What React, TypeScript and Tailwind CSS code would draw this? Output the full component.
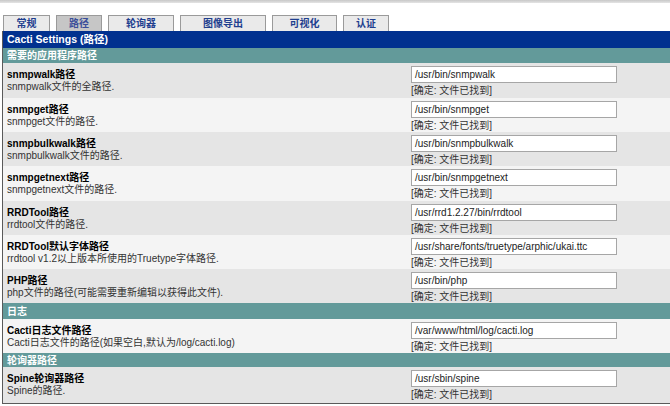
import React from 'react'

const tabs = [
  { label: '常规', w: 'w-[47px]', active: false },
  { label: '路径', w: 'w-[46px]', active: true },
  { label: '轮询器', w: 'w-[66px]', active: false },
  { label: '图像导出', w: 'w-[86px]', active: false },
  { label: '可视化', w: 'w-[65px]', active: false },
  { label: '认证', w: 'w-[46px]', active: false }
]

type Row = { kind: 'row'; title: string; desc: string; value: string; h: string; dark: boolean }
type Head = { kind: 'head'; label: string; h: string }

const rows: (Row | Head)[] = [
  { kind: 'row', title: 'snmpwalk路径', desc: 'snmpwalk文件的全路径.', value: '/usr/bin/snmpwalk', h: 'h-[35px]', dark: true },
  { kind: 'row', title: 'snmpget路径', desc: 'snmpget文件的路径.', value: '/usr/bin/snmpget', h: 'h-[34px]', dark: false },
  { kind: 'row', title: 'snmpbulkwalk路径', desc: 'snmpbulkwalk文件的路径.', value: '/usr/bin/snmpbulkwalk', h: 'h-[34px]', dark: true },
  { kind: 'row', title: 'snmpgetnext路径', desc: 'snmpgetnext文件的路径.', value: '/usr/bin/snmpgetnext', h: 'h-[35px]', dark: false },
  { kind: 'row', title: 'RRDTool路径', desc: 'rrdtool文件的路径.', value: '/usr/rrd1.2.27/bin/rrdtool', h: 'h-[34px]', dark: true },
  { kind: 'row', title: 'RRDTool默认字体路径', desc: 'rrdtool v1.2以上版本所使用的Truetype字体路径.', value: '/usr/share/fonts/truetype/arphic/ukai.ttc', h: 'h-[34px]', dark: false },
  { kind: 'row', title: 'PHP路径', desc: 'php文件的路径(可能需要重新编辑以获得此文件).', value: '/usr/bin/php', h: 'h-[34px]', dark: true },
  { kind: 'head', label: '日志', h: 'h-[16px]' },
  { kind: 'row', title: 'Cacti日志文件路径', desc: 'Cacti日志文件的路径(如果空白,默认为/log/cacti.log)', value: '/var/www/html/log/cacti.log', h: 'h-[34px]', dark: false },
  { kind: 'head', label: '轮询器路径', h: 'h-[14px]' },
  { kind: 'row', title: 'Spine轮询器路径', desc: 'Spine的路径.', value: '/usr/sbin/spine', h: 'h-[36px]', dark: true }
]

const font = "font-['Liberation_Sans','Noto_Sans_CJK_SC',sans-serif]"

export default function App() {
  return (
    <div className={`w-[670px] h-[406px] bg-white overflow-hidden ${font}`}>
      <div className="h-[3px] bg-gradient-to-b from-[#c8c8c8] to-[#e4e4e4]" />
      <div className="flex items-end gap-[6px] pl-[3px] pt-[9px] h-[28px]">
        {tabs.map((t) => (
          <div
            key={t.label}
            className={`${t.w} h-[16px] flex items-center justify-center border-t border-l border-r border-[#9a9a9a] text-[10px] font-bold ${
              t.active ? 'bg-[#c6c6c6] text-[#3b4f9a]' : 'bg-[#eaeaea] text-[#1f3f8f]'
            }`}
          >
            {t.label}
          </div>
        ))}
      </div>
      <div className="ml-[2px] border-l border-b border-[#5a5a5a]">
        <div className="h-[17px] bg-[#01318f] text-white text-[10.5px] font-bold flex items-center pl-[4px]">
          Cacti Settings (路径)
        </div>
        <div className="h-[15px] bg-[#639a9a] text-white text-[10px] font-bold flex items-center pl-[4px]">
          需要的应用程序路径
        </div>
        {rows.map((r, i) =>
          r.kind === 'head' ? (
            <div key={i} className={`${r.h} bg-[#639a9a] text-white text-[10px] font-bold flex items-center pl-[4px]`}>
              {r.label}
            </div>
          ) : (
            <div key={i} className={`${r.h} flex ${r.dark ? 'bg-[#e5e5e5]' : 'bg-[#f4f4f4]'}`}>
              <div className="flex-1 pl-[4px] pt-[6px] leading-[12px]">
                <div className="text-[10px] font-bold text-black">{r.title}</div>
                <div className="text-[10px] text-[#333]">{r.desc}</div>
              </div>
              <div className="w-[259px] pt-[3px]">
                <div className="w-[206px] h-[17px] bg-white border border-[#a6a6a6] flex items-center pl-[3px] text-[10px] text-[#222]">
                  {r.value}
                </div>
                <div className="text-[10px] leading-[13px] text-[#333] mt-[1px]">[确定: 文件已找到]</div>
              </div>
            </div>
          )
        )}
      </div>
    </div>
  )
}
